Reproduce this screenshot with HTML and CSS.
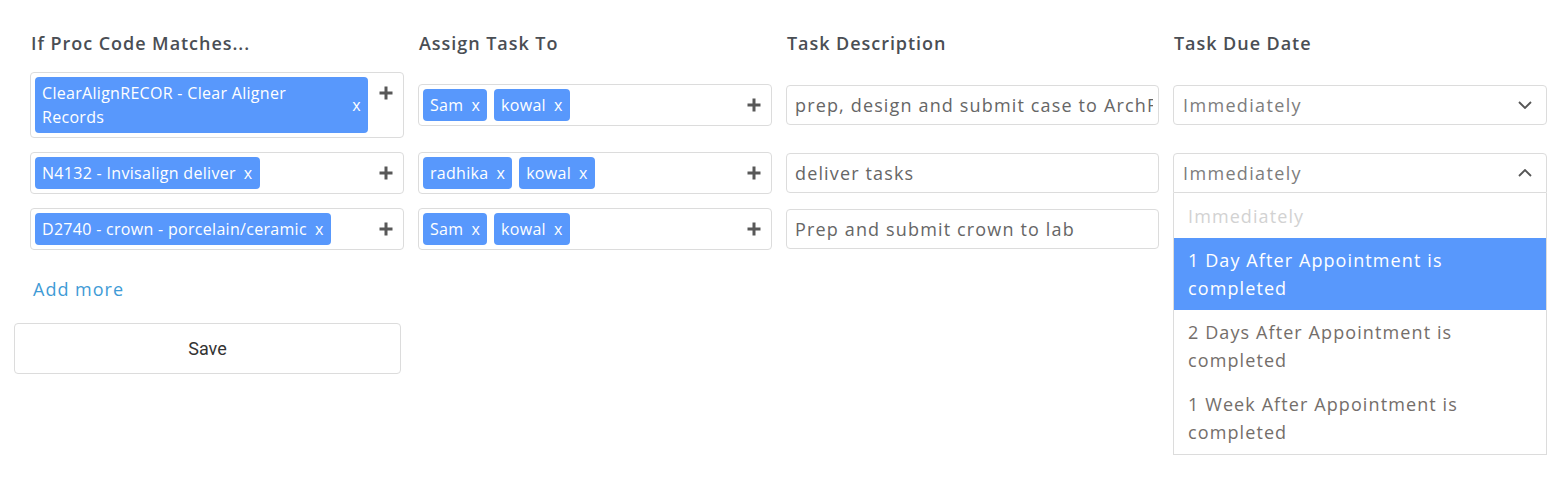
FILE: index.html
```html
<!DOCTYPE html>
<html>
<head>
<meta charset="utf-8">
<link rel="stylesheet" href="styles.css">
</head>
<body>
<div class="page">
  <div class="grid">
    <div class="head">If Proc Code Matches...</div>
    <div class="head">Assign Task To</div>
    <div class="head">Task Description</div>
    <div class="head">Task Due Date</div>

    <!-- row 1 -->
    <div class="cell">
      <div class="tagbox">
        <div class="tags">
          <span class="tag tag-wide"><span class="tag-text">ClearAlignRECOR - Clear Aligner Records</span><span class="tag-x">x</span></span>
        </div>
        <span class="plus"><svg viewBox="0 0 14 14" width="14" height="14"><path d="M7 0.5V13.5M0.5 7H13.5" stroke="#585858" stroke-width="3" fill="none"/></svg></span>
      </div>
    </div>
    <div class="cell">
      <div class="tagbox">
        <div class="tags">
          <span class="tag"><span class="tag-text">Sam</span><span class="tag-x">x</span></span>
          <span class="tag"><span class="tag-text">kowal</span><span class="tag-x">x</span></span>
        </div>
        <span class="plus"><svg viewBox="0 0 14 14" width="14" height="14"><path d="M7 0.5V13.5M0.5 7H13.5" stroke="#585858" stroke-width="3" fill="none"/></svg></span>
      </div>
    </div>
    <div class="cell">
      <input class="input" type="text" value="prep, design and submit case to ArchForm" readonly>
    </div>
    <div class="cell">
      <div class="select">
        <span class="select-val">Immediately</span>
        <svg class="chev" viewBox="0 0 14 8" width="14" height="8"><path d="M1 1L7 7L13 1" stroke="#555" stroke-width="1.8" fill="none"/></svg>
      </div>
    </div>

    <!-- row 2 -->
    <div class="cell">
      <div class="tagbox">
        <div class="tags">
          <span class="tag"><span class="tag-text">N4132 - Invisalign deliver</span><span class="tag-x">x</span></span>
        </div>
        <span class="plus"><svg viewBox="0 0 14 14" width="14" height="14"><path d="M7 0.5V13.5M0.5 7H13.5" stroke="#585858" stroke-width="3" fill="none"/></svg></span>
      </div>
    </div>
    <div class="cell">
      <div class="tagbox">
        <div class="tags">
          <span class="tag"><span class="tag-text">radhika</span><span class="tag-x">x</span></span>
          <span class="tag"><span class="tag-text">kowal</span><span class="tag-x">x</span></span>
        </div>
        <span class="plus"><svg viewBox="0 0 14 14" width="14" height="14"><path d="M7 0.5V13.5M0.5 7H13.5" stroke="#585858" stroke-width="3" fill="none"/></svg></span>
      </div>
    </div>
    <div class="cell">
      <input class="input" type="text" value="deliver tasks" readonly>
    </div>
    <div class="cell">
      <div class="dd">
        <div class="select select-open">
          <span class="select-val">Immediately</span>
          <svg class="chev" viewBox="0 0 14 8" width="14" height="8"><path d="M1 7L7 1L13 7" stroke="#555" stroke-width="1.8" fill="none"/></svg>
        </div>
        <div class="menu">
          <div class="opt opt-disabled">Immediately</div>
          <div class="opt opt-active">1 Day After Appointment is completed</div>
          <div class="opt">2 Days After Appointment is completed</div>
          <div class="opt">1 Week After Appointment is completed</div>
        </div>
      </div>
    </div>

    <!-- row 3 -->
    <div class="cell">
      <div class="tagbox">
        <div class="tags">
          <span class="tag"><span class="tag-text">D2740 - crown - porcelain/ceramic</span><span class="tag-x">x</span></span>
        </div>
        <span class="plus"><svg viewBox="0 0 14 14" width="14" height="14"><path d="M7 0.5V13.5M0.5 7H13.5" stroke="#585858" stroke-width="3" fill="none"/></svg></span>
      </div>
    </div>
    <div class="cell">
      <div class="tagbox">
        <div class="tags">
          <span class="tag"><span class="tag-text">Sam</span><span class="tag-x">x</span></span>
          <span class="tag"><span class="tag-text">kowal</span><span class="tag-x">x</span></span>
        </div>
        <span class="plus"><svg viewBox="0 0 14 14" width="14" height="14"><path d="M7 0.5V13.5M0.5 7H13.5" stroke="#585858" stroke-width="3" fill="none"/></svg></span>
      </div>
    </div>
    <div class="cell">
      <input class="input" type="text" value="Prep and submit crown to lab" readonly>
    </div>
    <div class="cell"></div>
  </div>

  <div class="add">Add more</div>
  <button class="save">Save</button>
</div>
</body>
</html>
```

FILE: styles.css
```css
html, body {
  margin: 0;
  padding: 0;
  background: #fff;
}

body {
  font-family: "Open Sans", "DejaVu Sans", sans-serif;
  min-height: 481px;
}

.page {
  padding: 0 0 0 14px;
  min-height: 481px;
  box-sizing: border-box;
}

.grid {
  display: grid;
  grid-template-columns: 374px 354px 373px 374px;
  column-gap: 14px;
  row-gap: 14px;
  padding: 31px 0 0 16px;
  align-items: center;
}

.head {
  font-size: 18px;
  line-height: 24px;
  font-weight: 600;
  color: #4a4e54;
  letter-spacing: 0.95px;
  margin-bottom: 3px;
  padding-left: 1px;
}

.cell {
  position: relative;
}

.tagbox {
  display: flex;
  align-items: flex-start;
  border: 1px solid #dcdcdc;
  border-radius: 4px;
  padding: 4px;
  background: #fff;
}

.tags {
  flex: 1;
  display: flex;
  flex-wrap: wrap;
  gap: 7px;
  min-width: 0;
  padding-right: 6px;
}

.tag {
  display: flex;
  align-items: center;
  background: #5898fc;
  color: #fff;
  border-radius: 4px;
  padding: 4px 7px 4px 7px;
  font-size: 16px;
  line-height: 24px;
  font-weight: 400;
  letter-spacing: 0.3px;
}

.tag-x {
  margin-left: 8px;
}

.tag-wide {
  flex: 1;
}

.tag-wide .tag-text {
  flex: 1;
}

.plus {
  width: 24px;
  height: 32px;
  display: flex;
  align-items: center;
  justify-content: center;
  flex: none;
  margin-right: 1px;
}

.plus svg {
  display: block;
}

.input {
  display: block;
  box-sizing: border-box;
  width: 100%;
  margin: 0;
  border: 1px solid #dcdcdc;
  border-radius: 4px;
  height: 40px;
  padding: 0 5px 0 8px;
  font-family: "Open Sans", "DejaVu Sans", sans-serif;
  font-size: 18px;
  color: #666;
  font-weight: 400;
  letter-spacing: 1.15px;
  background: #fff;
  outline: none;
}

.select {
  border: 1px solid #dcdcdc;
  border-radius: 4px;
  height: 38px;
  display: flex;
  align-items: center;
  justify-content: space-between;
  padding: 0 14px 0 9px;
  font-size: 18px;
  color: #7d7d7d;
  font-weight: 400;
  letter-spacing: 1.35px;
  background: #fff;
}

.select-open {
  border-radius: 4px 4px 0 0;
}

.chev {
  display: block;
}

.dd {
  position: relative;
}

.menu {
  position: absolute;
  left: 0;
  right: 0;
  top: 40px;
  border: 1px solid #dcdcdc;
  border-top: none;
  background: #fff;
  z-index: 2;
}

.opt {
  padding: 8px 14px;
  font-size: 18px;
  line-height: 28px;
  color: #746e6a;
  font-weight: 400;
  letter-spacing: 1.1px;
}

.opt-disabled {
  padding-top: 9px;
  color: #d2d2d2;
}

.opt-active {
  background: #5898fc;
  color: #fff;
}

.add {
  margin: 27px 0 0 19px;
  font-size: 18px;
  line-height: 24px;
  color: #3f9bd6;
  font-weight: 400;
  letter-spacing: 1px;
}

.save {
  display: block;
  margin-top: 22px;
  width: 387px;
  height: 51px;
  border: 1px solid #dcdcdc;
  border-radius: 4px;
  background: #fff;
  font-family: Roboto, "Liberation Sans", sans-serif;
  font-size: 18px;
  color: #333;
  padding: 0;
}
```
